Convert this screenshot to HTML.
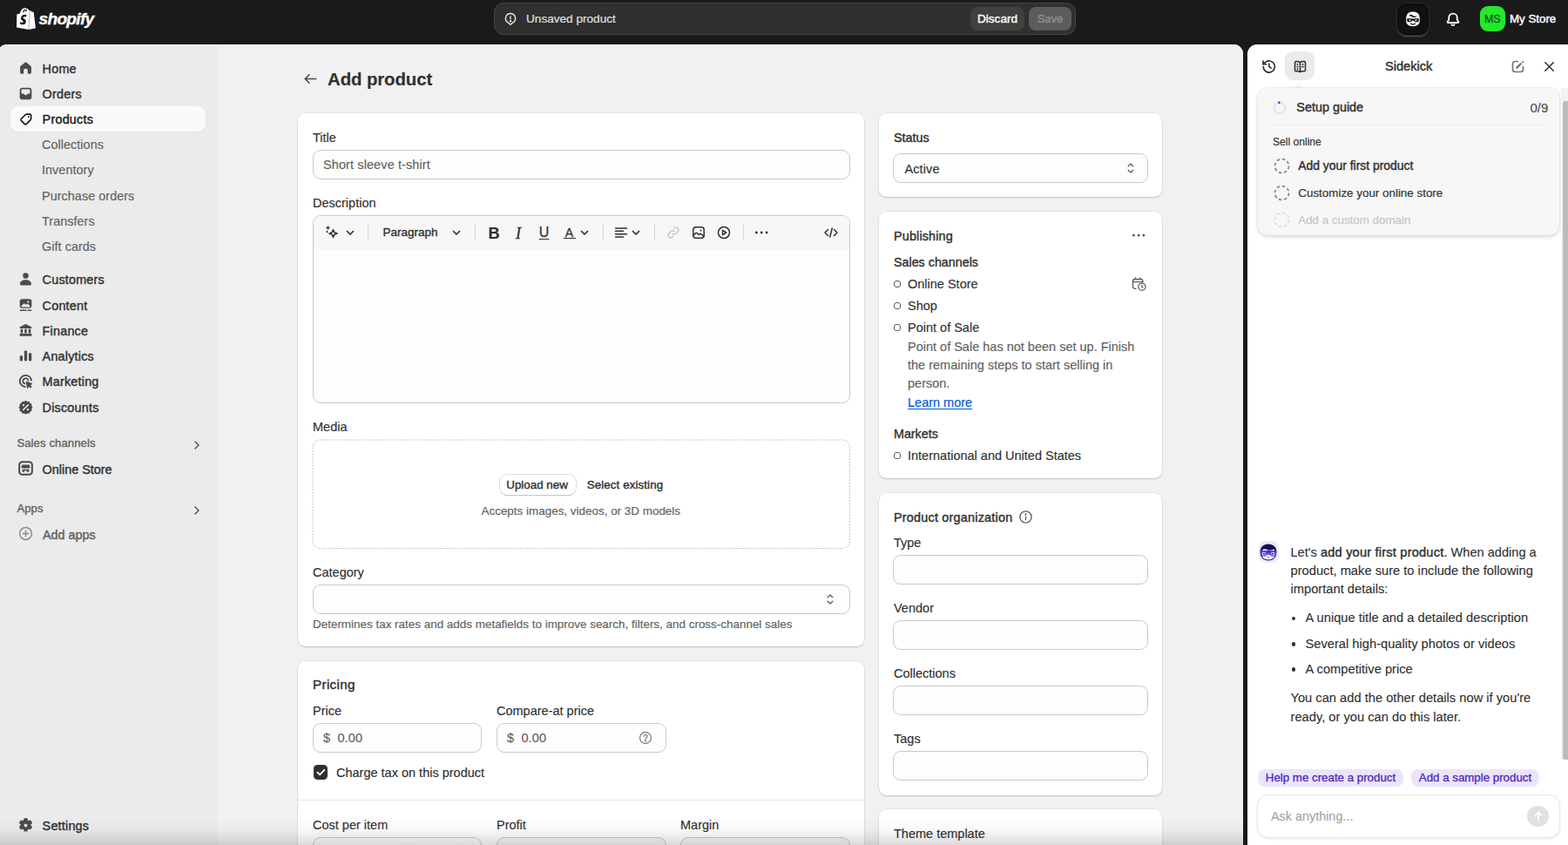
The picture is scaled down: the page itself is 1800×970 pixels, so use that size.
<!DOCTYPE html>
<html lang="en">
<head>
<meta charset="utf-8">
<title>Add product · My Store · Shopify</title>
<style>
*{box-sizing:border-box;margin:0;padding:0}
html,body{width:1800px;height:970px;overflow:hidden;background:#1a1a1a}
body{font-family:"Liberation Sans",sans-serif;font-size:14px;color:#303030;position:relative;letter-spacing:.2px}
.abs{position:absolute}
svg{display:block}
/* top bar */
#top{position:absolute;left:0;top:0;width:1800px;height:51px;background:#1a1a1a}
#logo-t{position:absolute;left:44.500px;top:9.300px;color:#fff;font-weight:700;font-style:italic;font-size:19.200px;letter-spacing:-.75px;line-height:26px;-webkit-text-stroke:.38px}
#savebar{position:absolute;left:567px;top:3px;width:668px;height:37px;background:#303030;border:1px solid #444;border-radius:11px}
#savebar .msg{position:absolute;left:36px;top:0;line-height:35px;color:#e3e3e3;font-size:13.600px;letter-spacing:0;-webkit-text-stroke:.15px}
.tbtn{position:absolute;top:4px;height:27px;line-height:27px;border-radius:8px;font-size:13.600px;text-align:center;letter-spacing:0;-webkit-text-stroke:.4px}
#discard{left:546px;width:62px;background:#404040;color:#fff}
#save{left:613px;width:49px;background:#5c5c5c;color:#8f8f8f;font-size:13px}
#skbtn{position:absolute;left:1604px;top:3.500px;width:36px;height:36.500px;border-radius:11px;background:#111;box-shadow:0 0 0 1px #2a2a2a,0 1.500px 2px rgba(255,255,255,.28),inset 0 0 3px #000}
#avatar{position:absolute;left:1698.500px;top:6.500px;width:29.500px;height:29.500px;border-radius:9px;background:#25e82b;color:#0b5a1e;-webkit-text-stroke:.3px;font-size:12.500px;line-height:30px;text-align:center;letter-spacing:0}
#store{position:absolute;left:1733px;top:8px;line-height:28px;color:#fff;font-weight:400;font-size:13.300px;letter-spacing:0;-webkit-text-stroke:.42px}
/* frame */
#side{position:absolute;left:-3px;top:50.600px;width:252px;height:920px;background:#ebebeb;border-top-left-radius:11px;box-shadow:inset 0 1px 0 rgba(255,255,255,.55)}
#side>*{margin-left:3px;margin-top:.4px}
#main{position:absolute;left:249px;top:50.600px;width:1178px;height:920px;background:#f1f1f1;overflow:hidden;border-top-right-radius:11px;box-shadow:inset 0 1px 0 rgba(255,255,255,.6),inset -1px 0 0 rgba(255,255,255,.6)}
#main>.pg{margin-top:.4px}
#kick{position:absolute;left:1431.700px;top:50.600px;width:369px;height:920px;background:#fff;border-top-left-radius:11px;overflow:hidden}
#kick>.pg{margin-top:.4px;margin-left:.3px}
/* nav */
.nav{position:absolute;left:11.500px;width:224.500px;height:29px;border-radius:9px}
.nav.sel{background:#fafafa;box-shadow:0 1px 0 rgba(0,0,0,.04)}
.nav svg{position:absolute;left:7px;top:4px;width:21px;height:21px}
.nav span{position:absolute;left:37.100px;top:.900px;line-height:29px;font-weight:400;font-size:14.400px;color:#303030;white-space:nowrap;letter-spacing:.2px;-webkit-text-stroke:.4px}
.nav.sub span{color:#616161;font-size:14.400px;-webkit-text-stroke:.15px;letter-spacing:.05px;left:36.500px;top:.500px}
.nav.sec span{left:7.900px;top:-.200px;color:#616161;font-size:13.100px;-webkit-text-stroke:.35px;letter-spacing:.1px}
.nav.sec svg{left:auto;right:3px;top:9.900px;width:14px;height:14px}

.pg{position:absolute;top:-51px;width:1800px;height:970px}
.card{position:absolute;background:#fff;border-radius:8.500px;box-shadow:0 0 0 .5px rgba(0,0,0,.08),0 1px 1.5px rgba(0,0,0,.16)}
.t{position:absolute;white-space:nowrap;line-height:20px;font-size:14.500px;letter-spacing:0;color:#303030;-webkit-text-stroke:.15px}
.b{font-size:14.400px;-webkit-text-stroke:.4px}
.mut{color:#616161}
.inp{position:absolute;height:34px;margin-left:-.4px;border:1px solid #c9c9c9;border-radius:9px;background:#fdfdfd}
.inp .t{top:6.300px;left:11.400px;letter-spacing:.1px}
.sep{position:absolute;width:1px;height:19.500px;top:257px;background:#d9d9d9}
.ic{position:absolute}
.dot{position:absolute;width:8.500px;height:8px;border:1.300px solid #5a5a5a;border-radius:3px}

.k{position:absolute;white-space:nowrap;line-height:21px;font-size:14.700px;letter-spacing:0;color:#303030;-webkit-text-stroke:.12px}
.dc{position:absolute;width:19px;height:19px}
.chip{position:absolute;top:883px;height:20px;border-radius:8px;background:#ebe5fc;color:#4f27b8;-webkit-text-stroke:.3px;font-size:13.300px;line-height:20.500px;text-align:center;letter-spacing:0;white-space:nowrap}
</style>
</head>
<body>
<div id="top">
  <svg class="abs" style="left:19px;top:8.800px" width="22.500" height="25.200" viewBox="0 0 22 26" preserveAspectRatio="none"><path fill="#fff" d="M19.3 5.1c0-.2-.2-.2-.3-.3l-2-.1-1.500-1.500c-.2-.1-.5-.1-.6 0l-.8.2C13.600 2 12.700.8 11.200.8h-.2C10.600.2 10 0 9.600 0 6 0 4.300 4.500 3.700 6.800l-2.500.8c-.8.2-.8.3-.9 1L0 23.100 13.800 25.700l7.700-1.600s-2.200-18.800-2.200-19zM11.700 3.700l-2.200.7c.4-1.600 1.200-2.400 1.900-2.700.2.500.3 1.100.3 2zM10.700 1c.1 0 .2 0 .3.100-.9.400-1.900 1.500-2.300 3.700l-1.800.5C7.400 3.600 8.600 1 10.700 1z"/><path d="M15 3.400l-1.300 22.200" stroke="#1a1a1a" stroke-width=".6" opacity=".55"/><path fill="#1a1a1a" d="M11.400 8.200l-.9 2.700s-.8-.4-1.700-.4c-1.400 0-1.500.9-1.500 1.100 0 1.200 3.200 1.700 3.200 4.600 0 2.300-1.400 3.700-3.300 3.700-2.300 0-3.500-1.400-3.500-1.400l.6-2s1.200 1 2.200 1c.7 0 1-.5 1-.900 0-1.600-2.600-1.700-2.600-4.300 0-2.200 1.600-4.400 4.800-4.400 1.200 0 1.700.3 1.700.3z"/></svg>
  <div id="logo-t">shopify</div>
  <div id="savebar">
    <svg class="abs" style="left:9px;top:9px" width="18" height="18" viewBox="0 0 20 20" fill="none" stroke="#e3e3e3" stroke-width="1.6" stroke-linecap="round" stroke-linejoin="round"><path d="M10 2.800a6.200 6.200 0 0 1 3.200 11.500l-3.200 2.600-3.200-2.600A6.200 6.200 0 0 1 10 2.800z"/><path d="M10 6.500v3.300"/><circle cx="10" cy="12.400" r=".6" fill="#e3e3e3"/></svg>
    <div class="msg">Unsaved product</div>
    <div class="tbtn" id="discard">Discard</div>
    <div class="tbtn" id="save">Save</div>
  </div>
  <div id="skbtn"></div>
  <svg class="abs" style="left:1612px;top:12px" width="20" height="20" viewBox="0 0 20 20"><path fill="#fff" d="M2.300 8.600C2.300 4 5.400 1.500 10 1.500s7.700 2.500 7.700 7.100l.1 3.500c0 4-3.200 6.100-7.800 6.100s-7.800-2.100-7.800-6.100z"/><path fill="#111" d="M5.300 6.300c1.300-1.700 3.300-1.900 4.500-.6 1.300 1.400 3.400 1.400 4.900.1-.7 2.300-3.600 3-5.300 1.600-1.300-1.100-2.700-1.300-4.100-1.100z"/><path fill="#111" d="M3.300 9.300h5.900l.8.800.8-.8h5.900v2.400c0 .9-.7 1.600-1.600 1.600h-2.900l-1.300-1.600H9.100l-1.300 1.600H4.900c-.9 0-1.600-.7-1.600-1.600z"/><circle cx="6.600" cy="11.200" r="1.050" fill="#fff"/><circle cx="13.400" cy="11.200" r="1.050" fill="#fff"/><path d="M7.300 15.300c1.700.9 3.700.9 5.400 0" stroke="#111" stroke-width="1.300" fill="none" stroke-linecap="round"/></svg>
  <svg class="abs" style="left:1656.500px;top:12px" width="22" height="20" viewBox="0 0 20 20" preserveAspectRatio="none" fill="none" stroke="#fff" stroke-width="1.650" stroke-linecap="round" stroke-linejoin="round"><path d="M10 3.600a4.300 4.300 0 0 0-4.300 4.300v2.300c0 .6-.2 1.200-.6 1.600l-.7.800c-.5.600-.1 1.500.7 1.500h9.800c.8 0 1.200-.9.700-1.500l-.7-.8a2.500 2.500 0 0 1-.6-1.600V7.900A4.300 4.300 0 0 0 10 3.600z"/><path d="M8.600 16.200a1.500 1.500 0 0 0 2.800 0" /></svg>
  <div id="avatar">MS</div>
  <div id="store">My Store</div>
</div>
<div id="side">
  <div class="nav" style="top:12.900px"><svg viewBox="0 0 20 20"><path fill="#4a4a4a" transform="translate(10 9.800) scale(.94) translate(-10 -10)" d="M9.100 3.300a1.400 1.400 0 0 1 1.800 0l5.100 4.300c.3.300.5.700.5 1.100v6.300a1.500 1.500 0 0 1-1.500 1.500h-2.600v-3.700a2.400 2.400 0 0 0-4.800 0v3.700H5a1.500 1.500 0 0 1-1.500-1.500V8.700c0-.4.200-.8.500-1.100z"/></svg><span>Home</span></div>
  <div class="nav" style="top:42.100px"><svg viewBox="0 0 20 20"><rect x="3.500" y="3.500" width="13" height="13" rx="3" fill="#4a4a4a"/><path fill="#ebebeb" d="M5.300 6.200c0-.5.400-.9.900-.9h7.600c.5 0 .9.400.9.900v3.900h-2.100c-.4 0-.7.300-.9.600a1.900 1.900 0 0 1-3.400 0c-.2-.3-.5-.6-.9-.6H5.300z"/></svg><span>Orders</span></div>
  <div class="nav sel" style="top:70.900px;height:29.400px"><svg viewBox="0 0 20 20" fill="none" stroke="#1a1a1a" stroke-width="1.800" stroke-linejoin="round"><g transform="translate(10.300 10.400) scale(.88) translate(-10 -10)"><path d="M10.600 3.700h4.200a1.500 1.500 0 0 1 1.500 1.500v4.200c0 .4-.2.800-.4 1.100l-5.400 5.400a1.500 1.500 0 0 1-2.100 0l-4.300-4.300a1.500 1.500 0 0 1 0-2.100l5.400-5.400c.3-.2.700-.4 1.100-.4z"/><circle cx="13.200" cy="6.800" r="1" fill="#1a1a1a" stroke="none"/></g></svg><span style="color:#1a1a1a;letter-spacing:.22px">Products</span></div>
  <div class="nav sub" style="top:100.600px"><span>Collections</span></div>
  <div class="nav sub" style="top:129.800px"><span>Inventory</span></div>
  <div class="nav sub" style="top:159.300px"><span>Purchase orders</span></div>
  <div class="nav sub" style="top:188.600px"><span>Transfers</span></div>
  <div class="nav sub" style="top:217.800px"><span>Gift cards</span></div>
  <div class="nav" style="top:255.200px"><svg viewBox="0 0 20 20" fill="#4a4a4a"><circle cx="10" cy="6.300" r="3.100"/><path d="M3.800 15.300c0-2.800 2.800-4.600 6.200-4.600s6.200 1.800 6.200 4.600c0 .8-.6 1.400-1.400 1.400H5.200c-.8 0-1.400-.6-1.400-1.400z"/></svg><span>Customers</span></div>
  <div class="nav" style="top:284.800px"><svg viewBox="0 0 20 20"><rect x="3.500" y="3" width="13" height="10" rx="2.600" fill="#4a4a4a"/><path fill="#ebebeb" d="M5.300 10.600l2.300-2.300c.4-.4 1-.4 1.400 0l1.300 1.300 1-1c.4-.4 1-.4 1.400 0l2 2v.5c0 .5-.4.900-.9.900H6.200c-.5 0-.9-.4-.9-.9z"/><circle cx="12.700" cy="6.300" r="1.100" fill="#ebebeb"/><path d="M4.200 15.500h6.300M12.500 15.500h3.300" stroke="#4a4a4a" stroke-width="1.500" stroke-linecap="round"/></svg><span>Content</span></div>
  <div class="nav" style="top:314.000px"><svg viewBox="0 0 20 20" fill="#4a4a4a"><path d="M9.300 3.200a1.500 1.500 0 0 1 1.400 0l5.400 2.700c.9.500.6 1.800-.5 1.800H4.400c-1.100 0-1.400-1.300-.5-1.800z"/><rect x="4.500" y="8.300" width="2.400" height="4.600"/><rect x="8.800" y="8.300" width="2.400" height="4.600"/><rect x="13.100" y="8.300" width="2.400" height="4.600"/><rect x="3.300" y="13.400" width="13.400" height="2.500" rx="1"/></svg><span>Finance</span></div>
  <div class="nav" style="top:343.300px"><svg viewBox="0 0 20 20" fill="#4a4a4a"><rect x="3.600" y="9.700" width="3.100" height="6" rx="1.100"/><rect x="8.450" y="4.300" width="3.100" height="11.400" rx="1.100"/><rect x="13.300" y="6.800" width="3.100" height="8.900" rx="1.100"/></svg><span>Analytics</span></div>
  <div class="nav" style="top:372.500px"><svg viewBox="0 0 20 20" fill="none" stroke="#4a4a4a" stroke-width="1.700" stroke-linecap="round"><path d="M16.200 9.200A6.300 6.300 0 1 0 9.200 16.200"/><path d="M12.800 9A3 3 0 1 0 9 12.800"/><path fill="#4a4a4a" stroke-width="1" stroke-linejoin="round" d="M10.800 10.800l6 2-2.500 1.300 1.900 1.900-1.100 1.100-1.900-1.900-1.300 2.400z"/></svg><span>Marketing</span></div>
  <div class="nav" style="top:401.800px"><svg viewBox="0 0 20 20"><path fill="#4a4a4a" d="M10 2.600l1.700 1.200 2.100-.2.900 1.900 1.900.9-.2 2.100 1.200 1.700-1.200 1.700.2 2.100-1.900.9-.9 1.900-2.100-.2-1.700 1.200-1.700-1.200-2.100.2-.9-1.900-1.900-.9.200-2.100L2.400 10.200l1.200-1.700-.2-2.100 1.900-.9.900-1.900 2.100.2z"/><path d="M7.300 12.900l5.400-5.400" stroke="#ebebeb" stroke-width="1.500" stroke-linecap="round"/><circle cx="7.600" cy="7.800" r="1.100" fill="#ebebeb"/><circle cx="12.400" cy="12.600" r="1.100" fill="#ebebeb"/></svg><span>Discounts</span></div>
  <div class="nav sec" style="top:442.900px"><span>Sales channels</span><svg viewBox="0 0 14 14" fill="none" stroke="#4a4a4a" stroke-width="1.400" stroke-linecap="round" stroke-linejoin="round"><path d="M5 3l4 4-4 4"/></svg></div>
  <div class="nav" style="top:472.900px"><svg viewBox="0 0 20 20" style="top:3px"><rect x="3" y="3" width="14" height="14" rx="3.200" fill="none" stroke="#4a4a4a" stroke-width="1.900"/><path fill="#4a4a4a" d="M6 6.200h8l.8 2.600a1.300 1.300 0 0 1-2.400.7 1.400 1.400 0 0 1-2.400 0 1.400 1.400 0 0 1-2.400 0 1.300 1.300 0 0 1-2.400-.7zM6.300 11.200h7.400v2.900H11.200v-1.500H8.800v1.500H6.300z"/></svg><span style="letter-spacing:0">Online Store</span></div>
  <div class="nav sec" style="top:518.000px"><span>Apps</span><svg viewBox="0 0 14 14" fill="none" stroke="#4a4a4a" stroke-width="1.400" stroke-linecap="round" stroke-linejoin="round"><path d="M5 3l4 4-4 4"/></svg></div>
  <div class="nav" style="top:548.000px"><svg viewBox="0 0 20 20" style="top:3.400px" fill="none" stroke="#8a8a8a" stroke-width="1.450" stroke-linecap="round"><circle cx="10" cy="10" r="6.600"/><path d="M10 7v6M7 10h6"/></svg><span style="color:#616161;letter-spacing:0;left:37.500px">Add apps</span></div>
  <div class="abs" style="left:0;top:887px;width:249px;height:32px;background:linear-gradient(to bottom,rgba(0,0,0,0),rgba(0,0,0,.025) 45%,rgba(0,0,0,.14))"></div>
  <div class="nav" style="top:882.300px"><svg viewBox="0 0 20 20"><path fill="#4a4a4a" fill-rule="evenodd" d="M8.600 2.800h2.800l.5 2 1.200.7 2-.6 1.400 2.400-1.500 1.400v1.400l1.500 1.400-1.400 2.400-2-.6-1.200.7-.5 2H8.600l-.5-2-1.200-.7-2 .6-1.400-2.400 1.500-1.400V8.700L3.500 7.300l1.400-2.400 2 .6 1.200-.7zM10 7.600a2.400 2.400 0 1 0 0 4.800 2.400 2.400 0 0 0 0-4.800z" stroke="#4a4a4a" stroke-width="1.200" stroke-linejoin="round"/></svg><span>Settings</span></div>
</div>
<div id="main"><div class="pg" style="left:-249px">
  <svg class="ic" style="left:346px;top:80px" width="21" height="21" viewBox="0 0 20 20" fill="none" stroke="#4a4a4a" stroke-width="1.500" stroke-linecap="round" stroke-linejoin="round"><path d="M16 10H4.500M8.500 5.500L4 10l4.500 4.500"/></svg>
  <div class="t" style="left:376px;top:76.700px;font-size:20.400px;font-weight:700;line-height:28px;letter-spacing:-.1px">Add product</div>

  <div class="card" style="left:342px;top:130.500px;width:650px;height:611.800px"></div>
  <div class="t" style="left:359px;top:147.700px">Title</div>
  <div class="inp" style="left:359px;top:172px;width:617px"><div class="t mut">Short sleeve t-shirt</div></div>
  <div class="t" style="left:359px;top:223px">Description</div>
  <div class="inp" style="left:359px;top:247px;width:617px;height:216px;overflow:hidden"><div style="position:absolute;left:0;top:0;width:100%;height:38px;background:#f7f7f7"></div></div>
  <div id="tb"><svg class="ic" style="left:371.0px;top:257.0px" width="20" height="20" viewBox="0 0 20 20" fill="none" stroke="#303030" stroke-width="1.5" stroke-linecap="round" stroke-linejoin="round"><path d="M11.500 6.500l1.300 3.200 3.200 1.300-3.200 1.300-1.300 3.200-1.300-3.200L7 11l3.200-1.300z"/><path d="M5.500 3v3M4 4.500h3" stroke-width="1.300"/><path d="M4.500 8.300v1.400M3.800 9h1.400" stroke-width="1"/></svg><svg class="ic" style="left:394.5px;top:260px" width="14" height="14" viewBox="0 0 14 14" fill="none" stroke="#303030" stroke-width="1.700" stroke-linecap="round" stroke-linejoin="round"><path d="M3.500 5.500L7 9l3.500-3.500"/></svg><div class="sep" style="left:422px"></div><div class="t" style="left:439.500px;top:257px;font-size:13.500px;-webkit-text-stroke:.35px #303030">Paragraph</div><svg class="ic" style="left:516.5px;top:260px" width="14" height="14" viewBox="0 0 14 14" fill="none" stroke="#303030" stroke-width="1.700" stroke-linecap="round" stroke-linejoin="round"><path d="M3.500 5.500L7 9l3.500-3.500"/></svg><div class="sep" style="left:544.5px"></div><div class="t" style="left:560px;top:255.800px;font-size:18.200px;font-weight:700;line-height:24px;width:14px;text-align:center">B</div><div class="t" style="left:588px;top:255.800px;font-size:18px;font-style:italic;font-family:'Liberation Serif',serif;line-height:24px;width:14px;text-align:center;-webkit-text-stroke:.3px #303030">I</div><div class="t" style="left:617.500px;top:254.600px;font-size:16px;line-height:24px;width:14px;text-align:center;text-decoration:underline;text-underline-offset:2px;-webkit-text-stroke:.25px #303030">U</div><div class="t" style="left:646.500px;top:255.200px;font-size:14px;line-height:24px;width:14px;text-align:center;-webkit-text-stroke:.3px #303030">A</div><div class="abs" style="left:647px;top:272.800px;width:14px;height:1.400px;background:#303030"></div><svg class="ic" style="left:664px;top:260px" width="14" height="14" viewBox="0 0 14 14" fill="none" stroke="#303030" stroke-width="1.700" stroke-linecap="round" stroke-linejoin="round"><path d="M3.500 5.500L7 9l3.500-3.500"/></svg><div class="sep" style="left:691.5px"></div><svg class="ic" style="left:703.3px;top:257.0px" width="20" height="20" viewBox="0 0 20 20" fill="none" stroke="#303030" stroke-width="1.5" stroke-linecap="round" stroke-linejoin="round"><path d="M3.500 5h13M3.500 8.300h9M3.500 11.700h13M3.500 15h9" stroke-width="1.400"/></svg><svg class="ic" style="left:723.4px;top:260px" width="14" height="14" viewBox="0 0 14 14" fill="none" stroke="#303030" stroke-width="1.700" stroke-linecap="round" stroke-linejoin="round"><path d="M3.500 5.500L7 9l3.500-3.500"/></svg><div class="sep" style="left:751px"></div><svg class="ic" style="left:762.9px;top:257.0px" width="20" height="20" viewBox="0 0 20 20" fill="none" stroke="#c9c9c9" stroke-width="1.5" stroke-linecap="round" stroke-linejoin="round"><path d="M8.800 11.200a3 3 0 0 0 4.200 0l2.300-2.300a3 3 0 0 0-4.200-4.200l-.8.800"/><path d="M11.200 8.800a3 3 0 0 0-4.200 0l-2.300 2.300a3 3 0 0 0 4.200 4.200l.8-.8"/></svg><svg class="ic" style="left:792.3px;top:257.0px" width="20" height="20" viewBox="0 0 20 20" fill="none" stroke="#303030" stroke-width="1.5" stroke-linecap="round" stroke-linejoin="round"><rect x="3.800" y="3.800" width="12.400" height="12.400" rx="3"/><path d="M4 13l2.600-2.400c.5-.4 1.100-.4 1.600 0l2 1.900 1-.9c.5-.4 1.100-.4 1.600 0l3 2.700"/><circle cx="12.500" cy="7.500" r="1" fill="#303030" stroke="none"/></svg><svg class="ic" style="left:821.3px;top:257.0px" width="20" height="20" viewBox="0 0 20 20" fill="none" stroke="#303030" stroke-width="1.5" stroke-linecap="round" stroke-linejoin="round"><circle cx="10" cy="10" r="6.500"/><path d="M8.500 7.300v5.400l4.200-2.700z"/></svg><div class="sep" style="left:852.5px"></div><svg class="ic" style="left:864.1px;top:257.0px" width="20" height="20" viewBox="0 0 20 20" fill="none" stroke="#303030" stroke-width="1.5" stroke-linecap="round" stroke-linejoin="round"><circle cx="4.300" cy="10" r="1.400" fill="#303030" stroke="none"/><circle cx="10.200" cy="10" r="1.400" fill="#303030" stroke="none"/><circle cx="16.100" cy="10" r="1.400" fill="#303030" stroke="none"/></svg><svg class="ic" style="left:943.7px;top:257.0px" width="20" height="20" viewBox="0 0 20 20" fill="none" stroke="#303030" stroke-width="1.5" stroke-linecap="round" stroke-linejoin="round"><path d="M6.500 6.500L3 10l3.500 3.500M13.500 6.500L17 10l-3.500 3.500M11.300 5l-2.600 10"/></svg></div>
  <div class="t" style="left:359px;top:480px">Media</div>
  <svg class="ic" style="left:358px;top:504px" width="619" height="127" viewBox="0 0 619 127" fill="none"><rect x="1" y="1" width="616.500" height="124.500" rx="8.500" stroke="#c2c2c2" stroke-width="1" stroke-dasharray="2 1.400"/></svg>
  <div class="abs" style="left:573.500px;top:544.800px;width:87px;height:23.500px;border-radius:8px;background:#fff;box-shadow:0 0 0 .7px #cfcfcf,0 1.200px 0 #bdbdbd"></div>
  <div class="t b" style="left:581.300px;top:546.600px;font-size:13.350px;letter-spacing:0;-webkit-text-stroke:.38px">Upload new</div>
  <div class="t b" style="left:673.700px;top:546.600px;font-size:13.350px;letter-spacing:.1px;-webkit-text-stroke:.38px">Select existing</div>
  <div class="t mut" style="left:552.500px;top:577px;font-size:13.450px">Accepts images, videos, or 3D models</div>
  <div class="t" style="left:359px;top:647.400px">Category</div>
  <div class="inp" style="left:359px;top:671px;width:617px"></div>
  <svg class="ic" style="left:943px;top:678px" width="20" height="20" viewBox="0 0 20 20" fill="none" stroke="#5c5c5c" stroke-width="1.300" stroke-linecap="round" stroke-linejoin="round"><path d="M7.200 7.800l2.800-2.800 2.800 2.800M7.200 12.200l2.800 2.800 2.800-2.800"/></svg>
  <div class="t mut" style="left:359px;top:707.400px;font-size:13.450px">Determines tax rates and adds metafields to improve search, filters, and cross-channel sales</div>

  <div class="card" style="left:342px;top:759px;width:650px;height:260px"></div>
  <div class="t b" style="left:359px;top:776.500px;font-size:15.300px;letter-spacing:.3px">Pricing</div>
  <div class="t" style="left:359px;top:806px">Price</div>
  <div class="inp" style="left:359px;top:830px;width:194px"><div class="t mut">$&nbsp; 0.00</div></div>
  <div class="t" style="left:570px;top:806px">Compare-at price</div>
  <div class="inp" style="left:570px;top:830px;width:195px"><div class="t mut">$&nbsp; 0.00</div></div>
  <svg class="ic" style="left:730.800px;top:837px" width="20" height="20" viewBox="0 0 20 20" fill="none" stroke="#8a8a8a" stroke-width="1.400" stroke-linecap="round" stroke-linejoin="round"><circle cx="10" cy="10" r="6.500"/><path d="M8.200 8.300a1.900 1.900 0 1 1 2.700 1.800c-.6.300-.9.700-.9 1.200"/><circle cx="10" cy="13.300" r=".5" fill="#8a8a8a"/></svg>
  <div class="abs" style="left:359.600px;top:878.500px;width:16.800px;height:16.800px;border-radius:4.500px;background:#303030"></div>
  <svg class="ic" style="left:359.600px;top:878.500px" width="16.800" height="16.800" viewBox="0 0 17 17" fill="none" stroke="#fff" stroke-width="1.900" stroke-linecap="round" stroke-linejoin="round"><path d="M4.500 8.800l2.700 2.700 5.300-5.600"/></svg>
  <div class="t" style="left:386px;top:877px">Charge tax on this product</div>
  <div class="abs" style="left:342px;top:918px;width:650px;height:1px;background:#e6e6e6"></div>
  <div class="t" style="left:359px;top:936.700px">Cost per item</div>
  <div class="t" style="left:570px;top:936.700px">Profit</div>
  <div class="t" style="left:781px;top:936.700px">Margin</div>
  <div class="inp" style="left:359px;top:961px;width:194px"></div>
  <div class="inp" style="left:570px;top:961px;width:195px;background:#f7f7f7"></div>
  <div class="inp" style="left:781px;top:961px;width:195px;background:#f7f7f7"></div>

  <div class="card" style="left:1009px;top:130.500px;width:325.300px;height:95.700px"></div>
  <div class="t b" style="left:1026px;top:148px">Status</div>
  <div class="inp" style="left:1025.600px;top:176.300px;width:293px;height:33.700px"><div class="t" style="top:6.500px;left:12.300px">Active</div></div>
  <svg class="ic" style="left:1288px;top:183px" width="20" height="20" viewBox="0 0 20 20" fill="none" stroke="#5c5c5c" stroke-width="1.300" stroke-linecap="round" stroke-linejoin="round"><path d="M7.200 7.800l2.800-2.800 2.800 2.800M7.200 12.200l2.800 2.800 2.800-2.800"/></svg>

  <div class="card" style="left:1009px;top:243px;width:325.300px;height:306px"></div>
  <div class="t b" style="left:1026px;top:261px;letter-spacing:.15px">Publishing</div>
  <svg class="ic" style="left:1297px;top:260.400px" width="20" height="20" viewBox="0 0 20 20" fill="#5a5a5a"><circle cx="4.400" cy="10" r="1.500"/><circle cx="10.200" cy="10" r="1.500"/><circle cx="15.900" cy="10" r="1.500"/></svg>
  <svg class="ic" style="left:1297px;top:316px" width="20" height="20" viewBox="0 0 20 20" fill="none" stroke="#5a5a5a" stroke-width="1.300" stroke-linecap="round" stroke-linejoin="round"><path d="M7 15.300H5.800a2.300 2.300 0 0 1-2.300-2.300V6.800a2.300 2.300 0 0 1 2.300-2.300h6.900A2.300 2.300 0 0 1 15 6.800v.9M3.500 7.700H15M6.400 2.800v1.700M12 2.800v1.700"/><circle cx="13.900" cy="13.200" r="4.100"/><path d="M13.900 11.300v2l1.100.9"/></svg>
  <div class="t b" style="left:1026px;top:291px;font-weight:400;font-size:14.300px;-webkit-text-stroke:.35px #303030">Sales channels</div>
  <div class="dot" style="left:1025.500px;top:322.500px"></div><div class="t" style="left:1042px;top:316.300px">Online Store</div>
  <div class="dot" style="left:1025.500px;top:347.500px"></div><div class="t" style="left:1042px;top:341.300px">Shop</div>
  <div class="dot" style="left:1025.500px;top:372.500px"></div><div class="t" style="left:1042px;top:366.300px">Point of Sale</div>
  <div class="t mut" style="left:1042px;top:388px;line-height:21.200px;white-space:normal;width:275px">Point of Sale has not been set up. Finish<br>the remaining steps to start selling in<br>person.</div>
  <div class="t" style="left:1042px;top:452.500px;color:#005bd3;text-decoration:underline;text-underline-offset:2px">Learn more</div>
  <div class="t b" style="left:1026px;top:488px;font-weight:400;font-size:14.300px;-webkit-text-stroke:.35px #303030">Markets</div>
  <div class="dot" style="left:1025.500px;top:519px"></div><div class="t" style="left:1042px;top:512.600px">International and United States</div>

  <div class="card" style="left:1009px;top:566px;width:325.300px;height:346.800px"></div>
  <div class="t b" style="left:1026px;top:583.800px;letter-spacing:.22px">Product organization</div>
  <svg class="ic" style="left:1167px;top:583px" width="21" height="21" viewBox="0 0 20 20" fill="none" stroke="#616161" stroke-width="1.300" stroke-linecap="round"><circle cx="10" cy="10" r="6.300"/><path d="M10 9.500v3.500"/><circle cx="10" cy="7" r=".5" fill="#616161"/></svg>
  <div class="t" style="left:1026px;top:612.800px">Type</div>
  <div class="inp" style="left:1025.600px;top:637px;width:293px"></div>
  <div class="t" style="left:1026px;top:687.800px">Vendor</div>
  <div class="inp" style="left:1025.600px;top:712px;width:293px"></div>
  <div class="t" style="left:1026px;top:763.300px">Collections</div>
  <div class="inp" style="left:1025.600px;top:787px;width:293px"></div>
  <div class="t" style="left:1026px;top:838.400px">Tags</div>
  <div class="inp" style="left:1025.600px;top:862px;width:293px"></div>

  <div class="card" style="left:1009px;top:929px;width:325.300px;height:100px"></div>
  <div class="t" style="left:1026px;top:947px">Theme template</div>
  <div class="abs" style="left:249px;top:938px;width:1178px;height:32px;background:linear-gradient(to bottom,rgba(0,0,0,0),rgba(0,0,0,.025) 45%,rgba(0,0,0,.14))"></div>
</div></div>
<div id="kick"><div class="pg" style="left:-1432px">
  <svg class="ic" style="left:1446px;top:66.500px" width="21" height="21" viewBox="0 0 20 20" fill="none" stroke="#303030" stroke-width="1.600" stroke-linecap="round" stroke-linejoin="round"><path d="M4 10a6.300 6.300 0 1 0 2-4.600L4 7.300"/><path d="M3.800 3.800v3.600h3.600"/><path d="M10.300 6.800V10l2.200 1.600"/></svg>
  <div class="abs" style="left:1475.400px;top:59.200px;width:33.300px;height:33.300px;border-radius:9px;background:#ebebeb"></div>
  <svg class="ic" style="left:1482px;top:65.700px" width="21" height="21" viewBox="0 0 20 20" fill="none" stroke="#303030" stroke-width="1.500" stroke-linecap="round" stroke-linejoin="round"><path d="M10 5.400v10.400M10 5.400c-1.300-1-3.200-1.200-4.700-1-.6.100-1 .6-1 1.200v8.300c0 .7.600 1.200 1.300 1.100 1.600-.2 3.200.1 4.400.8 1.200-.7 2.800-1 4.400-.8.700.1 1.300-.4 1.300-1.100V5.600c0-.6-.4-1.100-1-1.200-1.500-.2-3.400 0-4.700 1z"/><g fill="#303030" stroke="none"><rect x="6.300" y="6.600" width="1.700" height="1.700" rx=".4"/><rect x="6.300" y="9.300" width="1.700" height="1.700" rx=".4"/><rect x="6.300" y="12" width="1.700" height="1.700" rx=".4"/><rect x="12" y="6.600" width="1.700" height="1.700" rx=".4"/><rect x="12" y="9.300" width="1.700" height="1.700" rx=".4"/></g></svg>
  <div class="k" style="left:1590px;top:66.200px;font-size:14.600px;-webkit-text-stroke:.42px">Sidekick</div>
  <svg class="ic" style="left:1732px;top:66.300px" width="21" height="21" viewBox="0 0 20 20" fill="none" stroke="#757575" stroke-width="1.600" stroke-linecap="round" stroke-linejoin="round"><path d="M9.800 4.300H6.800a2.500 2.500 0 0 0-2.500 2.500v6.400a2.500 2.500 0 0 0 2.500 2.500h6.400a2.500 2.500 0 0 0 2.500-2.500v-3"/><path d="M8.900 11.100l4.200-4.200" stroke-width="2.200"/><path d="M15.200 4.800l.2.200" stroke-width="2"/></svg>
  <svg class="ic" style="left:1767.700px;top:66.300px" width="21" height="21" viewBox="0 0 20 20" fill="none" stroke="#303030" stroke-width="1.500" stroke-linecap="round"><path d="M5.500 5.500l9 9M14.500 5.500l-9 9"/></svg>

  <div class="abs" style="left:1487.500px;top:99px;width:8px;height:8px;background:#f7f7f7;transform:rotate(45deg);box-shadow:0 0 2px rgba(0,0,0,.12)"></div>
  <div class="abs" style="left:1444.400px;top:101.500px;width:345.300px;height:168.500px;border-radius:11px;background:#f7f7f7;box-shadow:0 0 0 .5px rgba(0,0,0,.04),0 2px 5px rgba(0,0,0,.13),0 0 3px rgba(0,0,0,.07)"></div>
  <svg class="ic" style="left:1461px;top:115.600px" width="16" height="16" viewBox="0 0 16 16" fill="none"><circle cx="8" cy="8" r="6.300" stroke="#e6e6e6" stroke-width="2.200"/><circle cx="7.300" cy="1.800" r="1.250" fill="#3d2be0"/></svg>
  <div class="k" style="left:1488.300px;top:113.300px;font-size:14.400px;-webkit-text-stroke:.42px">Setup guide</div>
  <div class="k" style="left:1756.500px;top:113.300px;font-size:15px;color:#4a4a4a">0/9</div>
  <div class="abs" style="left:1457px;top:142.800px;width:321px;height:1px;background:#ebebeb"></div>
  <div class="k" style="left:1461px;top:153.000px;font-size:12.100px;-webkit-text-stroke:.15px">Sell online</div>
  <svg class="dc" style="left:1462.300px;top:181.000px" viewBox="0 0 19 19" fill="none" stroke="#8a8a8a" stroke-width="1.750"><circle cx="9.500" cy="9.500" r="8" stroke-dasharray="3.700 2.580"/></svg><div class="k" style="left:1490.300px;top:179.600px;font-size:13.900px;-webkit-text-stroke:.4px">Add your first product</div>
  <svg class="dc" style="left:1462.300px;top:212.000px" viewBox="0 0 19 19" fill="none" stroke="#8a8a8a" stroke-width="1.750"><circle cx="9.500" cy="9.500" r="8" stroke-dasharray="3.700 2.580"/></svg><div class="k" style="left:1490.300px;top:210.600px;font-size:13.400px;-webkit-text-stroke:.15px">Customize your online store</div>
  <svg class="dc" style="left:1462.300px;top:243.300px" viewBox="0 0 19 19" fill="none" stroke="#dedede" stroke-width="1.750"><circle cx="9.500" cy="9.500" r="8" stroke-dasharray="3.700 2.580"/></svg><div class="k" style="left:1490.300px;top:242.500px;font-size:13.350px;color:#c4c4c4">Add a custom domain</div>

  <div class="abs" style="left:1792px;top:101px;width:8px;height:771px;background:#f3f3f3"></div>
  <div class="abs" style="left:1794px;top:115.600px;width:6px;height:756px;background:#bcbcbc;border-radius:3px 0 0 3px"></div>

  <div class="abs" style="left:1444.600px;top:621.500px;width:23.800px;height:24.500px;border-radius:7px;background:#eee9ff"></div>
  <svg class="ic" style="left:1446.400px;top:623.600px" width="20" height="20" viewBox="0 0 20 20"><path fill="#1c0a5a" d="M.6 9.600C.6 3.900 4.500.4 10 .4s9.400 3.500 9.400 9.200c0 6.200-3.700 10-9.400 10S.6 15.800.6 9.600z"/><path fill="#f6f3ff" d="M1.800 11h16.400c0 4.600-3.200 7.400-8.200 7.400S1.800 15.600 1.800 11z"/><path fill="#f0ebff" d="M3 7.300c2-1.300 4.200-1.300 5.600-.3 1.800 1.200 5.200.7 7.900-.5l1 1.700H2.300z"/><path fill="#5b3fe4" d="M1.200 8.500h6.400L10 9.900l2.400-1.400h6.400v3.600c0 1.500-1.200 2.700-2.700 2.700h-2L10 12.200 5.900 14.800H3.900c-1.500 0-2.700-1.200-2.700-2.700z"/><circle cx="4.800" cy="11.700" r="2" fill="#e6e0ff"/><circle cx="15.200" cy="11.700" r="2" fill="#e6e0ff"/><circle cx="5" cy="11.700" r=".95" fill="#1c0a5a"/><circle cx="15" cy="11.700" r=".95" fill="#1c0a5a"/><path fill="#1c0a5a" d="M8.900 15.200h2.200L10 16.400z"/></svg>
  <div class="k" style="left:1481.500px;top:624.200px;font-size:14.600px">Let's <span style="-webkit-text-stroke:.4px;letter-spacing:.2px">add your first product</span>. When adding a</div>
  <div class="k" style="left:1481.500px;top:645.300px">product, make sure to include the following</div>
  <div class="k" style="left:1481.500px;top:666.400px">important details:</div>
  <div class="abs" style="left:1483px;top:708px;width:4.600px;height:4.600px;margin:-.3px;border-radius:2.300px;background:#303030"></div><div class="k" style="left:1498.500px;top:699.400px">A unique title and a detailed description</div>
  <div class="abs" style="left:1483px;top:737.500px;width:4.600px;height:4.600px;margin:-.3px;border-radius:2.300px;background:#303030"></div><div class="k" style="left:1498.500px;top:728.700px">Several high-quality photos or videos</div>
  <div class="abs" style="left:1483px;top:766.500px;width:4.600px;height:4.600px;margin:-.3px;border-radius:2.300px;background:#303030"></div><div class="k" style="left:1498.500px;top:758.000px">A competitive price</div>
  <div class="k" style="left:1481.500px;top:791.400px">You can add the other details now if you're</div>
  <div class="k" style="left:1481.500px;top:812.600px">ready, or you can do this later.</div>

  <div class="chip" style="left:1444px;width:167px">Help me create a product</div>
  <div class="chip" style="left:1620px;width:147px">Add a sample product</div>
  <div class="abs" style="left:1443.500px;top:911.700px;width:347.300px;height:50.500px;border-radius:13px;background:#fff;border:1px solid #e8e8e8;box-shadow:0 1px 3px rgba(0,0,0,.09)"></div>
  <div class="k" style="left:1459px;top:927.400px;color:#a3a3a3;font-size:14.400px">Ask anything...</div>
  <div class="abs" style="left:1753.500px;top:925px;width:24.500px;height:24.500px;border-radius:50%;background:#e1e1e1"></div>
  <svg class="ic" style="left:1758px;top:929.500px" width="16" height="16" viewBox="0 0 16 16" fill="none" stroke="#fff" stroke-width="1.700" stroke-linecap="round" stroke-linejoin="round"><path d="M8 12.500v-9M4.300 7L8 3.300 11.700 7"/></svg>
</div></div>
</body>
</html>
